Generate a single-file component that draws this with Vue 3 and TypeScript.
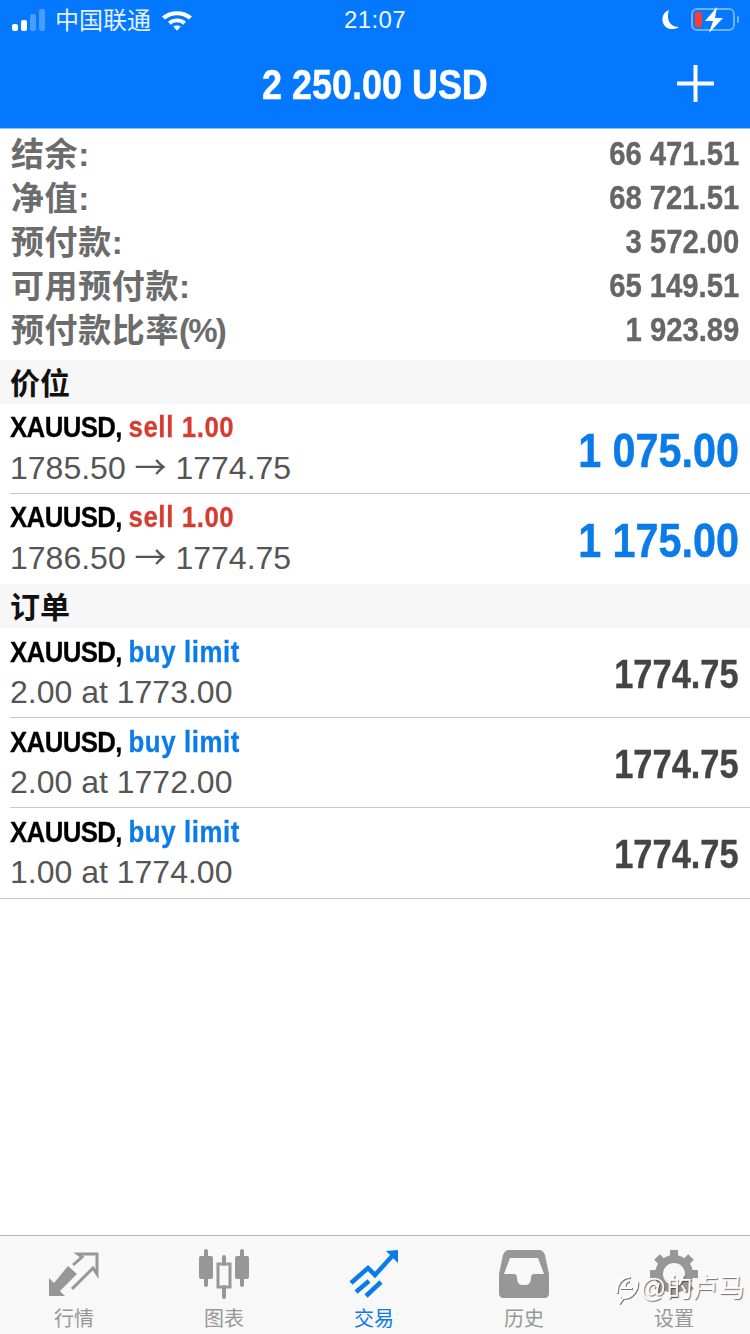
<script setup lang="ts">
const summary = [
  { label: '结余:', unit: '', value: '66 471.51' },
  { label: '净值:', unit: '', value: '68 721.51' },
  { label: '预付款:', unit: '', value: '3 572.00' },
  { label: '可用预付款:', unit: '', value: '65 149.51' },
  { label: '预付款比率', unit: '(%)', value: '1 923.89' },
]

const positions = [
  { side: 'sell 1.00', open: '1785.50', close: '1774.75', profit: '1 075.00' },
  { side: 'sell 1.00', open: '1786.50', close: '1774.75', profit: '1 175.00' },
]

const orders = [
  { side: 'buy limit', detail: '2.00 at 1773.00', price: '1774.75' },
  { side: 'buy limit', detail: '2.00 at 1772.00', price: '1774.75' },
  { side: 'buy limit', detail: '1.00 at 1774.00', price: '1774.75' },
]
</script>

<template>
  <div class="page">
    <div class="top">
      <div class="status">
        <div class="status-left">
          <span class="signal">
            <i class="on s1"></i><i class="on s2"></i><i class="s3"></i><i class="s4"></i>
          </span>
          <span class="carrier">中国联通</span>
          <svg class="wifi" width="30" height="22" viewBox="0 0 30 22">
            <path d="M0 7.500C8 .5 22 .5 30 7.500L27 10.500C20 4.800 10 4.800 3 10.500Z" fill="#fff" />
            <path d="M6 12.800C11.400 8.500 18.600 8.500 24 12.800L21.200 15.700C17.400 12.500 12.600 12.500 8.800 15.700Z" fill="#fff" />
            <path d="M11.200 17.600C13.400 16 16.600 16 18.800 17.600L15 21.800Z" fill="#fff" />
          </svg>
        </div>
        <span class="clock">21:07</span>
        <div class="status-right">
          <svg width="20" height="22" viewBox="0 0 20 22">
            <path d="M8 1C2 3 .5 9 2 14c2 6 10 8 16 4-6 0-9-3-10.500-7C6.500 7.500 7 4 8 1Z" fill="#fff" />
          </svg>
          <svg width="50" height="26" viewBox="0 0 50 26">
            <rect x="1" y="2" width="42" height="21" rx="5" fill="none" stroke="#6fb0ff" stroke-width="2" />
            <rect x="4" y="5" width="7" height="15" rx="2" fill="#ff3b30" />
            <rect x="46" y="9" width="2" height="7" rx="1" fill="#6fb0ff" />
            <path d="M26 0L14 14H22L18 26L32 11H24Z" fill="#fff" />
          </svg>
        </div>
      </div>
      <div class="titlebar">
        <span class="title">2 250.00 USD</span>
        <svg class="plus" width="37" height="37" viewBox="0 0 37 37">
          <path d="M18.500 0V37M0 18.500H37" stroke="#fff" stroke-width="4" />
        </svg>
      </div>
    </div>

    <div class="summary">
      <div v-for="row in summary" :key="row.label" class="summary-row">
        <span class="summary-label">{{ row.label }}<span v-if="row.unit" class="unit">{{ row.unit }}</span></span>
        <span class="summary-value">{{ row.value }}</span>
      </div>
    </div>

    <div class="section">价位</div>
    <div class="list">
      <div v-for="item in positions" :key="item.open" class="row">
        <div class="row-left">
          <span class="symbol">XAUUSD, <em class="sell">{{ item.side }}</em></span>
          <span class="detail">{{ item.open }} <span class="arrow">→</span> {{ item.close }}</span>
        </div>
        <span class="profit">{{ item.profit }}</span>
      </div>
    </div>

    <div class="section">订单</div>
    <div class="list orders">
      <div v-for="item in orders" :key="item.detail" class="row">
        <div class="row-left">
          <span class="symbol">XAUUSD, <em class="buy">{{ item.side }}</em></span>
          <span class="detail">{{ item.detail }}</span>
        </div>
        <span class="price">{{ item.price }}</span>
      </div>
    </div>

    <div class="spacer"></div>

    <div class="tabs">
      <div class="tab">
        <div class="tab-icon">
          <svg width="50" height="46" viewBox="0 0 50 46">
            <path d="M0 45V27L5 32L19 15L28 23L11 40L16 45Z" fill="#979797" />
            <path d="M24 14L33 6L29 3H48V23L44 17L23 38" fill="none" stroke="#979797" stroke-width="3" />
          </svg>
        </div>
        <span>行情</span>
      </div>
      <div class="tab">
        <div class="tab-icon">
          <svg width="52" height="50" viewBox="0 0 52 50">
            <path d="M8 2V36M44 2V36" stroke="#979797" stroke-width="4" stroke-linecap="round" />
            <rect x="1" y="7" width="14" height="23" rx="2" fill="#979797" />
            <rect x="37" y="7" width="14" height="23" rx="2" fill="#979797" />
            <path d="M26 8V15M26 38V48" stroke="#979797" stroke-width="4" stroke-linecap="round" />
            <rect x="20" y="15" width="12" height="23" fill="none" stroke="#979797" stroke-width="3" />
          </svg>
        </div>
        <span>图表</span>
      </div>
      <div class="tab active">
        <div class="tab-icon">
          <svg width="50" height="48" viewBox="0 0 50 48">
            <path d="M2 33L19 18L26 25L45 4" fill="none" stroke="#0a7be8" stroke-width="4.500" />
            <path d="M37 1L49 0V13Z" fill="#0a7be8" />
            <path d="M7 42L20 31M17 46L32 32" fill="none" stroke="#0a7be8" stroke-width="4.500" />
          </svg>
        </div>
        <span>交易</span>
      </div>
      <div class="tab">
        <div class="tab-icon">
          <svg width="50" height="48" viewBox="0 0 50 48">
            <path fill-rule="evenodd" d="M10 0H40C43 0 45 2 46 5L50 24V44C50 46 48 48 46 48H4C2 48 0 46 0 44V24L4 5C5 2 7 0 10 0ZM11 8L5 24H15C17 24 18 25 18 28C18 32 20 35 23 35H27C30 35 32 32 32 28C32 25 33 24 35 24H45L39 8Z" fill="#979797" />
          </svg>
        </div>
        <span>历史</span>
      </div>
      <div class="tab">
        <div class="tab-icon">
          <svg width="50" height="50" viewBox="0 0 50 50">
            <circle cx="25" cy="25" r="19" fill="#979797" />
            <path d="M25 1V49M1 25H49M8 8L42 42M42 8L8 42" stroke="#979797" stroke-width="8" />
            <circle cx="25" cy="25" r="11" fill="#f8f8f8" />
          </svg>
        </div>
        <span>设置</span>
      </div>
      <div class="watermark">
        <svg class="weibo" width="26" height="32" viewBox="0 0 26 32">
          <path d="M3 21C2 12 8 5 16 5M23 9C25 17 18 26 9 26L6 30L6 24M6 16H18M11 15C10 12 12 9 15 9" fill="none" stroke="#fff" stroke-width="2" />
        </svg>
        <span>@的卢马</span>
      </div>
    </div>
  </div>
</template>

<style scoped>
.page {
  width: 750px;
  height: 1334px;
  display: flex;
  flex-direction: column;
  position: relative;
  overflow: hidden;
  background: #fff;
  font-family: 'Liberation Sans', 'Noto Sans CJK SC', sans-serif;
}

.top {
  height: 129px;
  background: #0478fe;
  border-bottom: 1px solid #8fc0f5;
  box-sizing: border-box;
  color: #fff;
}

.status {
  height: 40px;
  display: flex;
  align-items: center;
  justify-content: space-between;
  padding: 0 9px 0 12px;
}

.status-left {
  width: 260px;
  display: flex;
  align-items: center;
}

.signal {
  display: flex;
  align-items: flex-end;
  gap: 3px;
  height: 22px;
  width: 33px;
}

.signal i {
  width: 6px;
  border-radius: 2px;
  background: #4a9cff;
}

.signal .on {
  background: #fff;
}

.s1 {
  height: 7px;
}

.s2 {
  height: 11px;
}

.s3 {
  height: 17px;
}

.s4 {
  height: 22px;
}

.carrier {
  margin-left: 10px;
  margin-bottom: 3px;
  font-size: 24px;
  color: #e4f0ff;
}

.wifi {
  margin-left: 11px;
}

.clock {
  margin-right: 3px;
  font-size: 24px;
  letter-spacing: 0.4px;
  color: #f0f6ff;
}

.status-right {
  width: 260px;
  display: flex;
  align-items: center;
  justify-content: flex-end;
  gap: 10px;
}

.titlebar {
  height: 88px;
  padding-top: 2px;
  box-sizing: border-box;
  display: flex;
  align-items: center;
  justify-content: center;
  position: relative;
}

.title {
  display: inline-block;
  font-size: 42px;
  font-weight: 700;
  white-space: pre;
  transform: scaleX(0.856);
  -webkit-text-stroke: 0.5px #fff;
}

.plus {
  position: absolute;
  right: 36px;
  top: 25px;
}

.summary {
  padding: 2px 11px 9px 11px;
}

.summary-row {
  height: 44px;
  display: flex;
  align-items: center;
  justify-content: space-between;
  color: #666;
}

.summary-label {
  margin-bottom: 2px;
  font-size: 33px;
  letter-spacing: 0.6px;
  font-weight: 700;
  color: #6c6c6c;
}

.unit {
  letter-spacing: -1.8px;
}

.summary-value {
  display: inline-block;
  font-size: 34px;
  font-weight: 700;
  transform: scaleX(0.86);
  transform-origin: right center;
  -webkit-text-stroke: 0.4px #666;
}

.section {
  height: 44px;
  line-height: 48px;
  padding-left: 10px;
  background: #f7f7f7;
  color: #111;
  font-size: 30px;
  font-weight: 700;
}

.row {
  height: 90px;
  margin-left: 10px;
  box-sizing: border-box;
  display: flex;
  align-items: center;
  justify-content: space-between;
  padding-right: 11px;
  border-bottom: 1px solid #c8c8c8;
}

.list .row:last-child {
  border-bottom-color: transparent;
}

.orders .row:last-child {
  height: 91px;
  margin-left: 0;
  padding-left: 10px;
  padding-bottom: 1px;
  border-bottom-color: #c8c8c8;
}

.row-left {
  display: flex;
  flex-direction: column;
  gap: 1px;
  margin-bottom: 2px;
}

.orders .row-left {
  gap: 3px;
  margin-bottom: 0;
}

.symbol {
  display: inline-block;
  font-size: 30px;
  line-height: 36px;
  font-weight: 700;
  letter-spacing: -0.7px;
  color: #000;
  white-space: pre;
  transform: scaleX(0.86);
  transform-origin: left center;
  -webkit-text-stroke: 0.3px currentColor;
}

.symbol em {
  font-style: normal;
  letter-spacing: 0.7px;
}

.sell {
  color: #d63c30;
}

.buy {
  color: #0a7be8;
}

.detail {
  font-size: 32px;
  line-height: 38px;
  color: #555;
}

.arrow {
  font-family: 'Noto Sans CJK SC', sans-serif;
}

.profit {
  display: inline-block;
  margin-top: 4px;
  font-size: 48px;
  font-weight: 700;
  color: #0a7be8;
  transform: scaleX(0.86);
  transform-origin: right center;
  -webkit-text-stroke: 0.5px #0a7be8;
}

.price {
  display: inline-block;
  margin-top: 4px;
  font-size: 40px;
  font-weight: 700;
  color: #444;
  transform: scaleX(0.86);
  transform-origin: right center;
  -webkit-text-stroke: 0.4px #444;
}

.spacer {
  flex: 1;
}

.tabs {
  height: 99px;
  box-sizing: border-box;
  border-top: 1px solid #b8b8b8;
  background: #f8f8f8;
  display: flex;
  position: relative;
}

.tab {
  width: 150px;
  padding: 13px 2px 0 0;
  box-sizing: border-box;
  display: flex;
  flex-direction: column;
  align-items: center;
  gap: 8px;
  font-size: 20px;
  line-height: 24px;
  color: #979797;
}

.tab.active {
  color: #0a7be8;
}

.tab-icon {
  height: 50px;
  display: flex;
  align-items: center;
}

.watermark {
  position: absolute;
  left: 614px;
  top: 36px;
  display: flex;
  align-items: center;
  white-space: nowrap;
  font-size: 26px;
  line-height: 32px;
  color: #fff;
  text-shadow: 1px 1px 1px rgba(0, 0, 0, 0.55);
}

.weibo {
  filter: drop-shadow(1px 1px 0 rgba(0, 0, 0, 0.5));
}
</style>
